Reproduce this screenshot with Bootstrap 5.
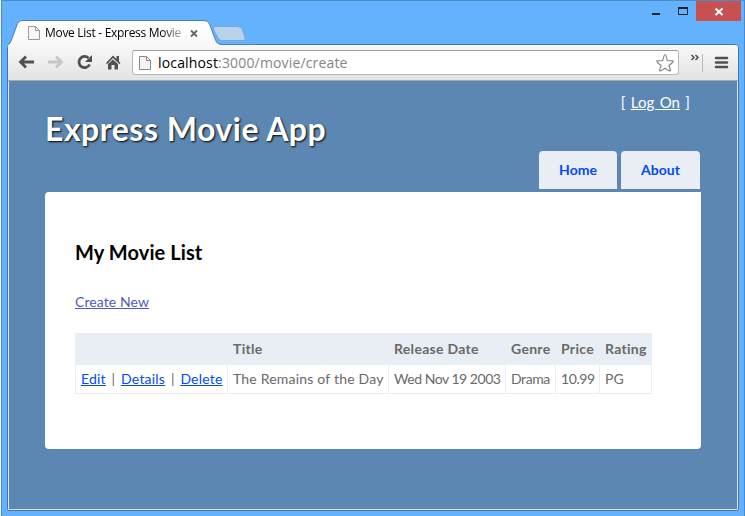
<!DOCTYPE html>
<html lang="en">
<head>
<meta charset="utf-8">
<meta name="viewport" content="width=device-width, initial-scale=1">
<title>Move List - Express Movie App</title>
<link href="https://cdn.jsdelivr.net/npm/bootstrap@5.3.0/dist/css/bootstrap.min.css" rel="stylesheet">
<style>
html,body{height:100%}
body{background:#64b1fd;overflow:hidden;font-family:Lato,"Open Sans",sans-serif;font-size:14px;line-height:18px;color:#696969}
.edge{border-left:1px solid #f4f4f4}
.win{height:516px;border:1px solid #4a8ac7;border-bottom:0;padding:0 5px}
.titlebar{height:43px}
.tabs-art{display:block}
.tab-wrap{width:240px;height:26px;margin-top:18px;position:relative;z-index:2}
.tab-text{position:absolute;left:38px;top:5px;width:139px;font:12px/18px "Open Sans",sans-serif;letter-spacing:-.3px;white-space:nowrap;color:#000;-webkit-mask-image:linear-gradient(90deg,#000 84%,transparent 104%);mask-image:linear-gradient(90deg,#000 84%,transparent 104%)}
.win-ctl{height:20px;margin-right:-2px}
.close-box{width:45px;height:20px;background:#c75050}
.frame{height:467px;border:1px solid #3f78ae;border-radius:4px 4px 2px 2px;background:#e3e3e3}
.toolbar{height:36px;background:linear-gradient(#f8f8f8,#e3e3e3);border-radius:3px 3px 0 0;border-bottom:1px solid #a9a9a9;padding-left:1px}
.address{width:547px;height:25px;border:1px solid #b8b8b8;border-top-color:#9c9c9c;border-radius:3px;background:#fff;font:14px/22px "Open Sans",sans-serif;letter-spacing:.16px;color:#858585;padding-left:6px;padding-right:3px}
.url{margin-left:7px}
.page-view{height:428px;margin:0 1px;background:#5c87b2}
.main-head{height:111px;padding-left:36px;padding-right:37px}
.app-title{font-size:32px;line-height:40px;letter-spacing:.5px;font-weight:700;color:#fff;text-shadow:1px 1px 2px #000;margin:28px 0 0}
.head-right{padding-bottom:3px}
.logon{font-size:15px;line-height:20px;letter-spacing:.1px;word-spacing:1.3px;color:#fff;margin:11px 10px 0 0}
.menu-link{height:38px;background:#e8eef4;color:#034af3;font-weight:700;line-height:38px;text-align:center;border-radius:4px 4px 0 0;text-decoration:none}
.home{width:78px}
.about{width:79px}
.panel{width:656px;height:257px;margin-left:36px;background:#fff;border-radius:4px 0 4px 4px;padding:47px 30px 0}
.panel h2{font-size:20px;line-height:26px;letter-spacing:.08px;font-weight:700;color:#000;margin:0}
.new-row{margin:28px 0 22px;letter-spacing:.1px}
.movies{width:576px;table-layout:fixed;border-collapse:collapse;margin:0}
.movies th,.movies td{border:1px solid #e8eef4;padding:0 5px;white-space:nowrap}
.movies th{background:#e8eef4;height:31px;font-weight:700;letter-spacing:.3px}
.movies td{height:29px}
.movies .acts{letter-spacing:.2px;word-spacing:2px}
.movies .name{letter-spacing:.2px}
.movies .date{letter-spacing:-.47px}
.movies .tight{letter-spacing:-.4px}
a{color:#034af3}
.made{color:#505abc}
</style>
</head>
<body>
<div class="edge">
<div class="win">
  <div class="titlebar d-flex justify-content-between">
    <div class="tab-wrap">
      <svg class="tabs-art" width="250" height="27" viewBox="0 0 250 27">
        <defs><linearGradient id="g" x2="0" y2="1"><stop stop-color="#fff"/><stop offset="1" stop-color="#f8f8f8"/></linearGradient></defs>
        <path d="M1 27V26Q3 25 4 22L10.500 4.500Q12 1.500 15 1.500H197Q201 1.500 202.500 5L208.500 21Q210 25.500 215 25.500V27Z" fill="url(#g)"/>
        <path d="M1 25.500Q3 25 4 22L10.500 4.500Q12 1.500 15 1.500H197Q201 1.500 202.500 5L208.500 21Q210 25.500 215 25.500H250" fill="none" stroke="#4580b9"/>
        <path d="M208 7.500H230Q234 7.500 235 10L238 18Q239 21.500 236 21.500H215Q212 21.500 211 19L206.500 10Q205.500 7.500 208 7.500Z" fill="#b6d2ec" stroke="#7ba7cf"/>
        <path d="M21.500 7.500H28.500L32.500 11.500V20.500H21.500ZM28.500 7.500V11.500H32.500" fill="#f7f7f7" stroke="#999"/>
        <path d="M184 11.500L190 17.500M190 11.500L184 17.500" stroke="#666" stroke-width="1.800"/>
      </svg>
      <span class="tab-text">Move List - Express Movie</span>
    </div>
    <div class="win-ctl d-flex">
      <svg width="58" height="20" viewBox="0 0 58 20"><path d="M14 13H22" stroke="#222" stroke-width="2"/><path d="M40.500 6.500H49.500V13.500H40.500Z" fill="none" stroke="#222"/><path d="M40 7H50" stroke="#222" stroke-width="2"/></svg>
      <div class="close-box"><svg class="d-block" width="45" height="20"><path d="M19.500 7.500L26.500 14M26.500 7.500L19.500 14" stroke="#fff" stroke-width="2"/></svg></div>
    </div>
  </div>
  <div class="frame">
    <div class="toolbar d-flex align-items-center">
      <svg width="123" height="35" viewBox="0 0 123 35">
        <g fill="none" stroke-width="2.800"><path d="M17 11.500L11.500 17L17 22.500M12 17H25" stroke="#505050"/><path d="M47 11.500L52.500 17L47 22.500M52 17H39" stroke="#c6c6c6"/><path d="M79.500 13A5.600 5.600 0 1 0 80.600 19.500" stroke="#505050"/></g>
        <path d="M83 10V17H76Z" fill="#505050"/>
        <path d="M97 18L104 10.500L107.500 14V11H110V16.500L111.500 18L110.500 19.200L104 13L98 19.200ZM99 19L104 14.500L109 19V24.500H105.500V20H102.500V24.500H99Z" fill="#505050"/>
      </svg>
      <div class="address d-flex align-items-center">
        <svg width="12" height="16" viewBox="0 0 12 16"><path d="M.5 1.500H7.500L11.500 5.500V14.500H.5ZM7.500 1.500V5.500H11.500" fill="#f4f4f4" stroke="#888"/></svg>
        <span class="url text-nowrap"><span class="text-black">localhost</span>:3000/movie/create</span>
        <svg class="ms-auto" width="20" height="20" viewBox="0 0 20 20"><path d="M10 1.500Q11 1.500 12.200 7.500L18 7.800Q19 9 14 12.200L15.500 17.500Q15 19 10 15.300Q5 19 4.500 17.500L6 12.200Q1 9 2 7.800L7.800 7.500Q9 1.500 10 1.500Z" fill="#fff" stroke="#888" stroke-width="1.200"/></svg>
      </div>
      <svg width="57" height="35" viewBox="0 0 57 35"><path d="M12.500 10L15 12.500L12.500 15M16.500 10L19 12.500L16.500 15" fill="none" stroke="#444" stroke-width="1.400"/><path d="M23.500 9V27" stroke="#b8b8b8"/><path d="M37 13H48M37 17.500H48M37 22H48" stroke="#505050" stroke-width="2.600" stroke-linecap="round"/></svg>
    </div>
    <div class="page-view">
      <div class="main-head d-flex justify-content-between">
        <h1 class="app-title text-nowrap">Express Movie App</h1>
        <div class="head-right d-flex flex-column justify-content-between align-items-end">
          <div class="logon text-nowrap">[ <a href="#" class="text-white">Log On</a> ]</div>
          <nav class="d-flex gap-1"><a href="#" class="menu-link home">Home</a><a href="#" class="menu-link about">About</a></nav>
        </div>
      </div>
      <main class="panel">
        <h2 class="text-nowrap">My Movie List</h2>
        <p class="new-row"><a href="#" class="made">Create New</a></p>
        <table class="movies">
          <colgroup><col style="width:152px"><col style="width:161px"><col style="width:117px"><col style="width:50px"><col style="width:44px"><col style="width:52px"></colgroup>
          <thead><tr><th></th><th>Title</th><th>Release Date</th><th>Genre</th><th>Price</th><th>Rating</th></tr></thead>
          <tbody><tr><td class="acts"><a href="#">Edit</a> | <a href="#">Details</a> | <a href="#">Delete</a></td><td class="name">The Remains of the Day</td><td class="date">Wed Nov 19 2003</td><td class="tight">Drama</td><td class="tight">10.99</td><td>PG</td></tr></tbody>
        </table>
      </main>
    </div>
  </div>
</div>
</div>
<script src="https://cdn.jsdelivr.net/npm/bootstrap@5.3.0/dist/js/bootstrap.bundle.min.js"></script>
</body>
</html>
